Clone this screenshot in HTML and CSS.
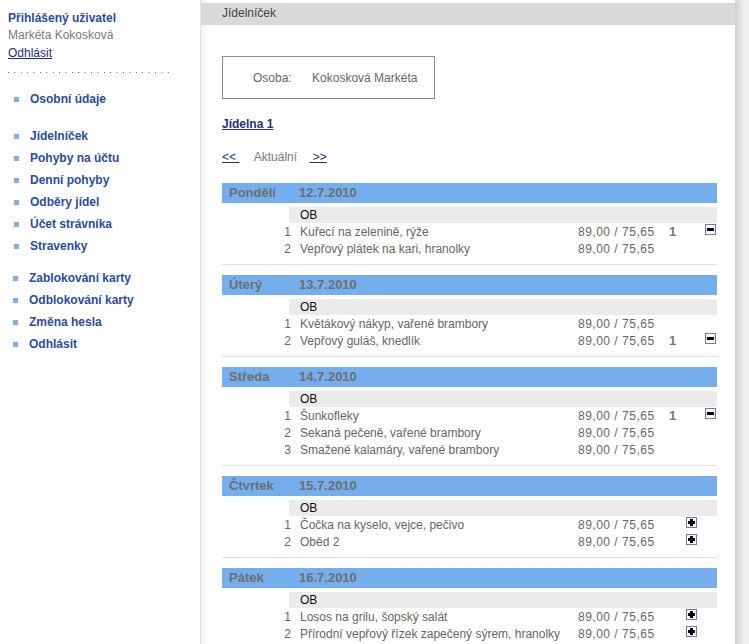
FILE: index.html
```html
<!DOCTYPE html>
<html lang="cs">
<head>
    <meta charset="UTF-8">
    <title>Jídelníček</title>
    <link rel="stylesheet" href="styles.css">
</head>
<body>
<div class="page">
    <div class="sidebar">
        <div class="user-title">Přihlášený uživatel</div>
        <div class="user-name">Markéta Kokosková</div>
        <a href="#" class="logout">Odhlásit</a>
        <div class="dots"></div>

        <ul class="menu">
            <li><a href="#">Osobní údaje</a></li>
        </ul>
        <ul class="menu">
            <li><a href="#">Jídelníček</a></li>
            <li><a href="#">Pohyby na účtu</a></li>
            <li><a href="#">Denní pohyby</a></li>
            <li><a href="#">Odběry jídel</a></li>
            <li><a href="#">Účet strávníka</a></li>
            <li><a href="#">Stravenky</a></li>
        </ul>
        <ul class="menu menu-last">
            <li><a href="#">Zablokování karty</a></li>
            <li><a href="#">Odblokování karty</a></li>
            <li><a href="#">Změna hesla</a></li>
            <li><a href="#">Odhlásit</a></li>
        </ul>
    </div>

    <div class="main">
        <div class="title-bar">Jídelníček</div>
        <div class="content">
            <div class="person">
                <span class="person-label">Osoba:</span>
                <span>Kokosková Markéta</span>
            </div>

            <a href="#" class="canteen">Jídelna 1</a>

            <div class="week-nav">
                <a href="#">&lt;&lt; </a>
                <span class="current">Aktuální</span>
                <a href="#"> &gt;&gt;</a>
            </div>

            <div class="day">
                <div class="day-head"><span class="day-name">Pondělí</span><span>12.7.2010</span></div>
                <div class="ob">OB</div>
                <div class="item">
                    <span class="num">1</span><span class="name">Kuřecí na zelenině, rýže</span>
                    <span class="price">89,00 / 75,65</span><span class="count">1</span>
                    <span class="add"></span><span class="remove"><span class="box minus"></span></span>
                </div>
                <div class="item">
                    <span class="num">2</span><span class="name">Vepřový plátek na kari, hranolky</span>
                    <span class="price">89,00 / 75,65</span><span class="count"></span>
                    <span class="add"></span><span class="remove"></span>
                </div>
            </div>

            <div class="day">
                <div class="day-head"><span class="day-name">Úterý</span><span>13.7.2010</span></div>
                <div class="ob">OB</div>
                <div class="item">
                    <span class="num">1</span><span class="name">Květákový nákyp, vařené brambory</span>
                    <span class="price">89,00 / 75,65</span><span class="count"></span>
                    <span class="add"></span><span class="remove"></span>
                </div>
                <div class="item">
                    <span class="num">2</span><span class="name">Vepřový guláš, knedlík</span>
                    <span class="price">89,00 / 75,65</span><span class="count">1</span>
                    <span class="add"></span><span class="remove"><span class="box minus"></span></span>
                </div>
            </div>

            <div class="day">
                <div class="day-head"><span class="day-name">Středa</span><span>14.7.2010</span></div>
                <div class="ob">OB</div>
                <div class="item">
                    <span class="num">1</span><span class="name">Šunkofleky</span>
                    <span class="price">89,00 / 75,65</span><span class="count">1</span>
                    <span class="add"></span><span class="remove"><span class="box minus"></span></span>
                </div>
                <div class="item">
                    <span class="num">2</span><span class="name">Sekaná pečeně, vařené brambory</span>
                    <span class="price">89,00 / 75,65</span><span class="count"></span>
                    <span class="add"></span><span class="remove"></span>
                </div>
                <div class="item">
                    <span class="num">3</span><span class="name">Smažené kalamáry, vařené brambory</span>
                    <span class="price">89,00 / 75,65</span><span class="count"></span>
                    <span class="add"></span><span class="remove"></span>
                </div>
            </div>

            <div class="day">
                <div class="day-head"><span class="day-name">Čtvrtek</span><span>15.7.2010</span></div>
                <div class="ob">OB</div>
                <div class="item">
                    <span class="num">1</span><span class="name">Čočka na kyselo, vejce, pečivo</span>
                    <span class="price">89,00 / 75,65</span><span class="count"></span>
                    <span class="add"><span class="box plus"></span></span><span class="remove"></span>
                </div>
                <div class="item">
                    <span class="num">2</span><span class="name">Oběd 2</span>
                    <span class="price">89,00 / 75,65</span><span class="count"></span>
                    <span class="add"><span class="box plus"></span></span><span class="remove"></span>
                </div>
            </div>

            <div class="day">
                <div class="day-head"><span class="day-name">Pátek</span><span>16.7.2010</span></div>
                <div class="ob">OB</div>
                <div class="item">
                    <span class="num">1</span><span class="name">Losos na grilu, šopský salát</span>
                    <span class="price">89,00 / 75,65</span><span class="count"></span>
                    <span class="add"><span class="box plus"></span></span><span class="remove"></span>
                </div>
                <div class="item">
                    <span class="num">2</span><span class="name">Přírodní vepřový řízek zapečený sýrem, hranolky</span>
                    <span class="price">89,00 / 75,65</span><span class="count"></span>
                    <span class="add"><span class="box plus"></span></span><span class="remove"></span>
                </div>
            </div>
        </div>
    </div>
</div>
</body>
</html>
```

FILE: styles.css
```css
body {
    margin: 0;
    font-family: "Liberation Sans", Arial, sans-serif;
    font-size: 12px;
    color: #666;
    background: linear-gradient(to right, #fff 200px, #efefef 200px);
    height: 644px;
    overflow: hidden;
}

a {
    color: #1c327a;
}

.page {
    display: flex;
    align-items: flex-start;
}

/* left column */
.sidebar {
    width: 200px;
    flex: none;
    padding: 10px 0 0 8px;
    box-sizing: border-box;
}

.user-title {
    font-weight: bold;
    color: #2b4a9f;
    line-height: 17px;
}

.user-name {
    color: #7a7a7a;
    line-height: 17px;
}

.logout {
    display: block;
    line-height: 19px;
}

.dots {
    width: 166px;
    height: 1px;
    margin-top: 9px;
    background-image: linear-gradient(to right, #4a5f96 1px, transparent 1px);
    background-size: 6.4px 1px;
}

.menu {
    list-style: none;
    margin: 15px 0 0;
    padding: 0;
}

.menu + .menu {
    margin-top: 15px;
}

.menu-last {
    margin-left: -1px;
}

.menu + .menu-last {
    margin-top: 10px;
}

.menu li {
    display: flex;
    align-items: center;
    height: 22px;
}

.menu li::before {
    content: "";
    width: 5px;
    height: 5px;
    margin: 0 11px 0 6px;
    background: #7fb0ea;
}

.menu a {
    color: #2d4ba0;
    font-weight: bold;
    text-decoration: none;
}

/* main panel */
.main {
    width: 535px;
    flex: none;
    min-height: 644px;
    padding-top: 3px;
    background: #fff;
    border-left: 1px solid #e2e2e2;
    box-sizing: border-box;
    box-shadow: inset 10px 0 8px -8px rgba(0, 0, 0, 0.08), 5px 0 5px rgba(0, 0, 0, 0.12);
}

.title-bar {
    height: 22px;
    line-height: 21px;
    padding-left: 21px;
    background: #d9d9d9;
    color: #444;
}

.content {
    padding: 31px 18px 0 21px;
}

.person {
    width: 181px;
    height: 41px;
    line-height: 42px;
    padding-left: 30px;
    border: 1px solid #8a8a8a;
}

.person-label {
    margin-right: 17px;
}

.canteen {
    display: inline-block;
    margin-top: 18px;
    font-weight: bold;
}

.week-nav {
    margin-top: 19px;
    line-height: 14px;
}

.week-nav a {
    white-space: pre;
}

.current {
    margin: 0 9px 0 11px;
    color: #7a7a7a;
}

.day {
    margin-top: 19px;
    padding-bottom: 7px;
    border-bottom: 1px solid #d7e3ef;
}

.day + .day {
    margin-top: 10px;
}

.day-head {
    height: 20px;
    line-height: 20px;
    padding-left: 7px;
    background: #74aeec;
    color: #6e6e6e;
    font-size: 13px;
    font-weight: bold;
}

.day-name {
    display: inline-block;
    width: 70px;
}

.ob {
    margin: 4px 0 0 67px;
    padding-left: 11px;
    height: 16px;
    line-height: 17px;
    background: #ebebeb;
    color: #111;
}

.item {
    display: flex;
    height: 17px;
    line-height: 18px;
}

.num {
    width: 69px;
    text-align: right;
}

.name {
    width: 278px;
    padding-left: 9px;
    white-space: nowrap;
}

.price {
    width: 91px;
    letter-spacing: 0.5px;
    white-space: nowrap;
}

.count {
    width: 17px;
    font-weight: bold;
    font-size: 13px;
    color: #777;
}

.add {
    width: 19px;
}

.remove {
    width: 11px;
}

.box {
    display: block;
    position: relative;
    width: 9px;
    height: 9px;
    margin-top: 1px;
    border: 1px solid #6a78c4;
    background: #fff;
}

.box::before,
.box::after {
    content: "";
    position: absolute;
    background: #000;
}

.minus::before {
    left: 1px;
    top: 3px;
    width: 7px;
    height: 3px;
}

.plus::before {
    left: 1px;
    top: 3px;
    width: 7px;
    height: 3px;
}

.plus::after {
    left: 3px;
    top: 1px;
    width: 3px;
    height: 7px;
}
```
